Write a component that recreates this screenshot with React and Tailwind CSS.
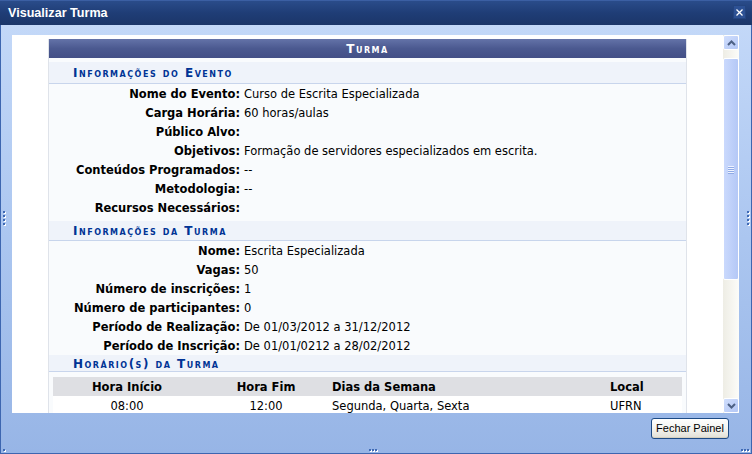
import React from "react";

const F = "font-['DejaVu_Sans',Verdana,sans-serif]";

function Section({ title, className = "" }) {
  return (
    <div
      className={`flex items-center pl-[24px] bg-[#EFF3FA] border-b border-[#C8D5EC] text-[#003395] font-bold text-[12px] tracking-[1.5px] [font-variant:small-caps] ${className}`}
    >
      {title}
    </div>
  );
}

function Row({ label, value }) {
  return (
    <div className="flex h-[19px] pt-[3px] items-center text-[11.5px] text-black">
      <div className="w-[191px] shrink-0 text-right font-bold whitespace-nowrap">{label}</div>
      <div className="pl-[4px] whitespace-nowrap">{value}</div>
    </div>
  );
}

function Chevron({ up }) {
  return (
    <svg width="9" height="6" viewBox="0 0 9 6">
      <path
        d={up ? "M1 5 L4.5 1.5 L8 5" : "M1 1 L4.5 4.5 L8 1"}
        fill="none"
        stroke="#4d6185"
        strokeWidth="2"
      />
    </svg>
  );
}

function ScrollBtn({ up }) {
  return (
    <div className="h-[15px] shrink-0 rounded-[2px] border border-white bg-gradient-to-br from-[#d0defd] to-[#b3c7f5] flex items-center justify-center">
      <Chevron up={up} />
    </div>
  );
}

function Dots({ className, vertical }) {
  const n = vertical ? 4 : 3;
  return (
    <div className={`absolute flex ${vertical ? "flex-col gap-[2px]" : "flex-row gap-[1px]"} ${className}`}>
      {Array.from({ length: n }).map((_, i) => (
        <div key={i} className="w-[2px] h-[2px] bg-[#3f6ab5] shadow-[1px_1px_0_#ffffff]" />
      ))}
    </div>
  );
}

export default function App() {
  return (
    <div className={`w-[752px] h-[454px] relative overflow-hidden flex flex-col ${F}`}>
      {/* Title bar */}
      <div className="h-[25px] shrink-0 flex items-center justify-between bg-gradient-to-b from-[#2a4c8a] via-[#1f3d76] to-[#1b3669] border-t border-[#3b5fa3]">
        <span className="pl-[8px] text-white font-bold text-[12.6px] font-['Liberation_Sans',Arial,sans-serif]">
          Visualizar Turma
        </span>
        <div className="mr-[6px] mb-[2px] w-[13px] h-[14px] bg-[#2d5194] border border-[#24447f] flex items-center justify-center">
          <svg width="7" height="7" viewBox="0 0 7 7">
            <path d="M0.5 0.5 L6.5 6.5 M6.5 0.5 L0.5 6.5" stroke="#ffffff" strokeWidth="1.3" />
          </svg>
        </div>
      </div>

      {/* Frame body */}
      <div className="flex-1 flex flex-col bg-gradient-to-b from-[#c3d8f8] via-[#abc6f0] to-[#97b5e6] border-x border-b border-[#3d66b0]">
        <div className="flex mt-[10px] ml-[11px]">
          {/* content */}
          <div className="w-[711px] h-[378px] bg-white overflow-hidden pt-[4px] pl-[36px]">
            <div className="w-[639px] border-x border-[#dfe3ea] bg-[#F9FBFD]">
              <div className="h-[19px] flex items-center justify-center text-white font-bold text-[12px] tracking-[1.5px] [font-variant:small-caps] bg-gradient-to-b from-[#6473a8] via-[#4b5990] to-[#434f86]">
                Turma
              </div>
              <Section title="Informações do Evento" className="mt-[4px] h-[22px]" />
              <Row label="Nome do Evento:" value="Curso de Escrita Especializada" />
              <Row label="Carga Horária:" value="60 horas/aulas" />
              <Row label="Público Alvo:" value="" />
              <Row label="Objetivos:" value="Formação de servidores especializados em escrita." />
              <Row label="Conteúdos Programados:" value="--" />
              <Row label="Metodologia:" value="--" />
              <Row label="Recursos Necessários:" value="" />
              <Section title="Informações da Turma" className="mt-[4px] h-[20px]" />
              <Row label="Nome:" value="Escrita Especializada" />
              <Row label="Vagas:" value="50" />
              <Row label="Número de inscrições:" value="1" />
              <Row label="Número de participantes:" value="0" />
              <Row label="Período de Realização:" value="De 01/03/2012 a 31/12/2012" />
              <Row label="Período de Inscrição:" value="De 01/01/0212 a 28/02/2012" />
              <Section title="Horário(s) da Turma" className="h-[17px] pt-[2px]" />
              <div className="px-[4px] pt-[5px] pb-[6px]">
                <div className="grid grid-cols-[148px_130px_277px_1fr] h-[19px] pt-[2px] items-center bg-[#DEDFE3] text-[11.5px] font-bold text-black">
                  <div className="text-center">Hora Início</div>
                  <div className="text-center">Hora Fim</div>
                  <div className="pl-[1px]">Dias da Semana</div>
                  <div className="pl-[2px]">Local</div>
                </div>
                <div className="grid grid-cols-[148px_130px_277px_1fr] h-[18px] pt-[2px] items-center bg-white text-[11.5px] text-black">
                  <div className="text-center">08:00</div>
                  <div className="text-center">12:00</div>
                  <div className="pl-[1px]">Segunda, Quarta, Sexta</div>
                  <div className="pl-[2px]">UFRN</div>
                </div>
              </div>
            </div>
          </div>

          {/* scrollbar */}
          <div className="w-[16px] h-[378px] flex flex-col bg-gradient-to-r from-[#eeede5] to-[#fcfcf9]">
            <ScrollBtn up />
            <div className="h-[8px] shrink-0" />
            <div className="h-[222px] shrink-0 rounded-[2px] border border-white bg-gradient-to-r from-[#cad9fd] to-[#b4c8f6] flex flex-col items-center justify-center gap-[1px]">
              {[0, 1, 2, 3].map((i) => (
                <div key={i} className="w-[6px] h-[1px] bg-[#eef3ff] shadow-[0_1px_0_#8faae6]" />
              ))}
            </div>
            <div className="flex-1" />
            <ScrollBtn />
          </div>
        </div>

        {/* bottom bar */}
        <div className="flex justify-end pr-[22px] pt-[5px]">
          <button className="w-[78px] h-[21px] rounded-[3px] border border-[#1c4a85] bg-gradient-to-b from-[#ffffff] via-[#f4f4f0] to-[#e2e0d6] text-[11px] text-black font-['Liberation_Sans',Arial,sans-serif] shadow-[inset_0_-1px_0_#d6d0c0]">
            Fechar Painel
          </button>
        </div>
      </div>

      {/* resize grips */}
      <Dots vertical className="left-[3px] top-[211px]" />
      <Dots vertical className="right-[3px] top-[211px]" />
      <Dots className="left-[369px] bottom-[3px]" />
      <Dots className="right-[3px] bottom-[3px]" />
      <div className="absolute left-[3px] bottom-[3px] w-[2px] h-[2px] bg-[#3f6ab5] shadow-[1px_1px_0_#ffffff]" />
    </div>
  );
}
